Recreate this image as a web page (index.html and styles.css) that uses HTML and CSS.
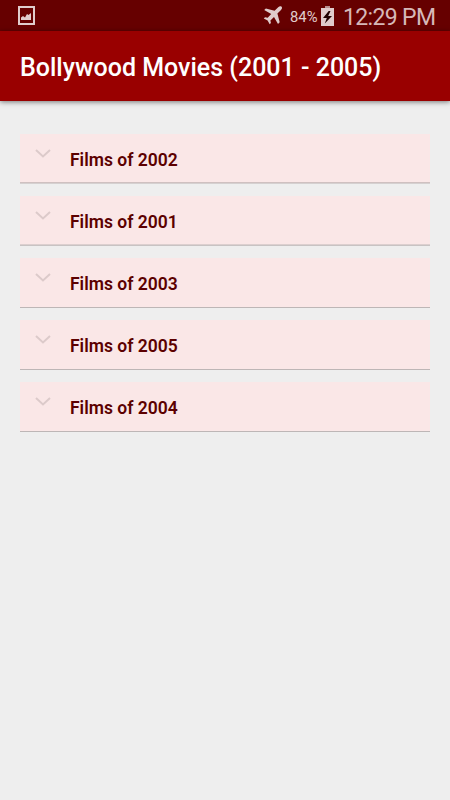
FILE: index.html
```html
<!DOCTYPE html>
<html lang="en">
<head>
<meta charset="utf-8">
<title>Bollywood Movies</title>
<link rel="stylesheet" href="styles.css">
</head>
<body>
<div class="status">
  <svg class="picture" width="18" height="20" viewBox="0 0 18 20"><path d="M1 1h15v17H1z" fill="none" stroke="currentColor" stroke-width="2"/><path d="M3 14v-2.500l2-1.500 2 1.500 2-3.500 1.500 1L13 7v7z" fill="currentColor"/></svg>
  <div class="system">
    <svg class="plane" width="20" height="20" viewBox="0 0 20 20"><path d="M18.6.8c.8.8.5 2-.6 3.1l-3.6 3.6 2.3 8.7-1.7 1.7-4-7-3.6 3.5.5 2.7-1.2 1.2-2.1-3.8L.8 12.4 2 11.200l2.700.5 3.500-3.600-7-4L2.900 2.400l8.700 2.300 3.600-3.400C16.300.2 17.800 0 18.600.8z" fill="currentColor"/></svg>
    <span class="percent">84%</span>
    <svg class="battery" width="13" height="20" viewBox="0 0 13 20"><path d="M4 0h5v2h4v18H0V2h4z" fill="currentColor"/><path d="M4 0h5v2H4z" fill="#b88f8f"/><path d="M7.700 5L2 12h3.800l-2 5.500L11 10H7.200l2.300-5z" fill="#210000"/></svg>
    <span class="clock">12:29 PM</span>
  </div>
</div>
<header class="appbar"><h1>Bollywood Movies (2001 - 2005)</h1></header>
<main class="groups">
  <div class="group"><svg class="chevron" width="16" height="9" viewBox="0 0 16 9"><path d="M1 1l7 6.500 7-6.500"/></svg><span>Films of 2002</span></div>
  <div class="group"><svg class="chevron" width="16" height="9" viewBox="0 0 16 9"><path d="M1 1l7 6.500 7-6.500"/></svg><span>Films of 2001</span></div>
  <div class="group"><svg class="chevron" width="16" height="9" viewBox="0 0 16 9"><path d="M1 1l7 6.500 7-6.500"/></svg><span>Films of 2003</span></div>
  <div class="group"><svg class="chevron" width="16" height="9" viewBox="0 0 16 9"><path d="M1 1l7 6.500 7-6.500"/></svg><span>Films of 2005</span></div>
  <div class="group"><svg class="chevron" width="16" height="9" viewBox="0 0 16 9"><path d="M1 1l7 6.500 7-6.500"/></svg><span>Films of 2004</span></div>
</main>
</body>
</html>
```

FILE: styles.css
```css
* { box-sizing: border-box; }
body {
  margin: 0;
  height: 800px;
  overflow: hidden;
  background: #eee;
  font-family: Roboto, sans-serif;
}
svg { display: block; flex: none; }
.status {
  height: 31px;
  padding: 0 14px 0 18px;
  display: flex;
  align-items: flex-start;
  justify-content: space-between;
  background: #660000;
  color: #e0cccc;
}
.picture { margin-top: 6px; }
.system { display: flex; align-items: flex-start; }
.plane { margin: 6px 7px 0 0; }
.percent {
  width: 28px;
  margin-right: 3px;
  font-size: 14.800px;
  line-height: 34px;
  white-space: nowrap;
}
.battery { margin: 6px 9px 0 0; }
.clock {
  width: 93px;
  font-size: 23px;
  letter-spacing: -.65px;
  line-height: 35px;
  color: #d6b8b8;
  white-space: nowrap;
}
.appbar {
  height: 70px;
  padding: 0 20px;
  background: #990000;
  box-shadow: 0 1px 5px rgba(0, 0, 0, .5);
}
.appbar h1 {
  margin: 0;
  padding-top: 1px;
  font-size: 25px;
  font-weight: 500;
  line-height: 72px;
  color: #fff;
  white-space: nowrap;
}
.groups {
  padding: 33px 20px 0;
  display: flex;
  flex-direction: column;
  gap: 12px;
}
.group {
  height: 50px;
  padding-left: 15px;
  display: flex;
  align-items: flex-start;
  background: #fae7e7;
  border-bottom: 1px solid #bdb6b6;
  color: #5c0000;
  font-size: 17.500px;
  font-weight: 600;
  line-height: 52px;
}
.group:first-child {
  height: 49px;
  margin-bottom: 1px;
  border-bottom-color: #cfc0c0;
  box-shadow: 0 1px #d5d0d0;
}
.group:nth-child(2) {
  height: 49px;
  margin-bottom: 1px;
  border-bottom-color: #dccfcf;
  box-shadow: 0 1px #c8c3c3;
}
.chevron {
  margin: 15px 19px 0 0;
  fill: none;
  stroke: #dccaca;
  stroke-width: 2;
}
```
